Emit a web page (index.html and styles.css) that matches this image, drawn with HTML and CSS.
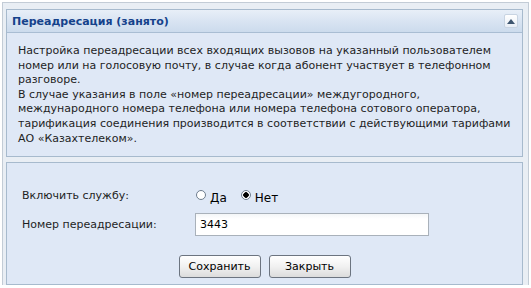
FILE: index.html
```html
<!DOCTYPE html>
<html lang="ru">
<head>
  <meta charset="UTF-8" />
  <title>Переадресация (занято)</title>
  <link rel="stylesheet" href="styles.css">
</head>
<body>

<div class="window">
  <div class="panel">
    <div class="panel-head">
      <span class="panel-title">Переадресация (занято)</span>
      <span class="tool-collapse">
        <svg width="8" height="5" viewBox="0 0 8 5"><path d="M0 5 L4 0 L8 5 Z" fill="#3f5670"/></svg>
      </span>
    </div>
    <div class="panel-body info">
      Настройка переадресации всех входящих вызовов на указанный пользователем<br>
      номер или на голосовую почту, в случае когда абонент участвует в телефонном<br>
      разговоре.<br>
      В случае указания в поле «номер переадресации» междугородного,<br>
      международного номера телефона или номера телефона сотового оператора,<br>
      тарификация соединения производится в соответствии с действующими тарифами<br>
      АО «Казахтелеком».
    </div>
  </div>

  <div class="panel form-panel">
    <div class="form-row">
      <label class="form-label">Включить службу:</label>
      <div class="radios">
        <label class="radio"><span class="radio-dot"></span><span class="radio-text">Да</span></label>
        <label class="radio"><span class="radio-dot checked"></span><span class="radio-text">Нет</span></label>
      </div>
    </div>
    <div class="form-row">
      <label class="form-label">Номер переадресации:</label>
      <div class="text-field">3443</div>
    </div>
    <div class="buttons">
      <button class="btn">Сохранить</button>
      <button class="btn">Закрыть</button>
    </div>
  </div>
</div>

</body>
</html>
```

FILE: styles.css
```css
html, body {
  margin: 0;
  padding: 0;
  background: #ffffff;
}

body {
  font-family: "DejaVu Sans", Verdana, sans-serif;
  font-size: 11px;
  color: #000;
}

.window {
  margin: 2px 2px 0 2px;
  height: 283px;
  box-sizing: border-box;
  border: 1px solid #c3ccd6;
  border-bottom: none;
  background: #e9eef4;
  padding: 6px 5px 0 3px;
  display: flex;
  flex-direction: column;
  gap: 5px;
}

.panel {
  border: 1px solid #a7bacd;
  background: #dfe8f6;
}

.panel-head {
  height: 22px;
  display: flex;
  align-items: center;
  justify-content: space-between;
  padding: 0 4px 0 5px;
  background: linear-gradient(to bottom, #e8eff8 0%, #d9e4f2 50%, #ccdbed 100%);
  border-bottom: 1px solid #a9bdd3;
}

.panel-title {
  font-weight: bold;
  font-size: 11px;
  color: #15428b;
}

.tool-collapse {
  width: 14px;
  height: 14px;
  box-sizing: border-box;
  border: 1px solid #c8d4e2;
  border-radius: 2px;
  background: linear-gradient(to bottom, #ffffff, #e8eef6);
  display: flex;
  align-items: center;
  justify-content: center;
}

.info {
  padding: 11px 11px 10px 11px;
  line-height: 14.6px;
  white-space: nowrap;
  color: #1e1e1e;
}

.form-panel {
  flex: 1;
  padding: 18px 15px 0 15px;
}

.form-row {
  display: flex;
  align-items: center;
  height: 29px;
}

.form-label {
  width: 173px;
  color: #1e1e1e;
}

.radios {
  display: flex;
  gap: 14px;
  padding-top: 2px;
  padding-left: 1px;
}

.radio {
  display: flex;
  align-items: center;
  gap: 4px;
}

.radio-dot {
  width: 10px;
  height: 10px;
  box-sizing: border-box;
  border-radius: 50%;
  border: 1px solid #6e7d8e;
  background: #fff;
  position: relative;
  top: -2px;
}

.radio-dot.checked {
  background: radial-gradient(circle, #000 0 2.5px, #fff 3px);
}

.radio-text {
  position: relative;
  top: 1px;
  font-size: 12px;
}

.text-field {
  width: 234px;
  height: 23px;
  box-sizing: border-box;
  border: 1px solid #a9b1ba;
  background: linear-gradient(to bottom, #f4f6f8 0, #ffffff 5px);
  padding: 0 4px;
  display: flex;
  align-items: center;
}

.buttons {
  display: flex;
  justify-content: center;
  gap: 8px;
  margin-top: 16px;
}

.btn {
  font-family: "DejaVu Sans", Verdana, sans-serif;
  font-size: 11px;
  width: 82px;
  height: 23px;
  border: 1px solid #6c7480;
  border-radius: 3px;
  background: linear-gradient(to bottom, #ffffff 0%, #f1f1f1 50%, #dcdcdc 100%);
  color: #000;
  padding: 0;
}
```
